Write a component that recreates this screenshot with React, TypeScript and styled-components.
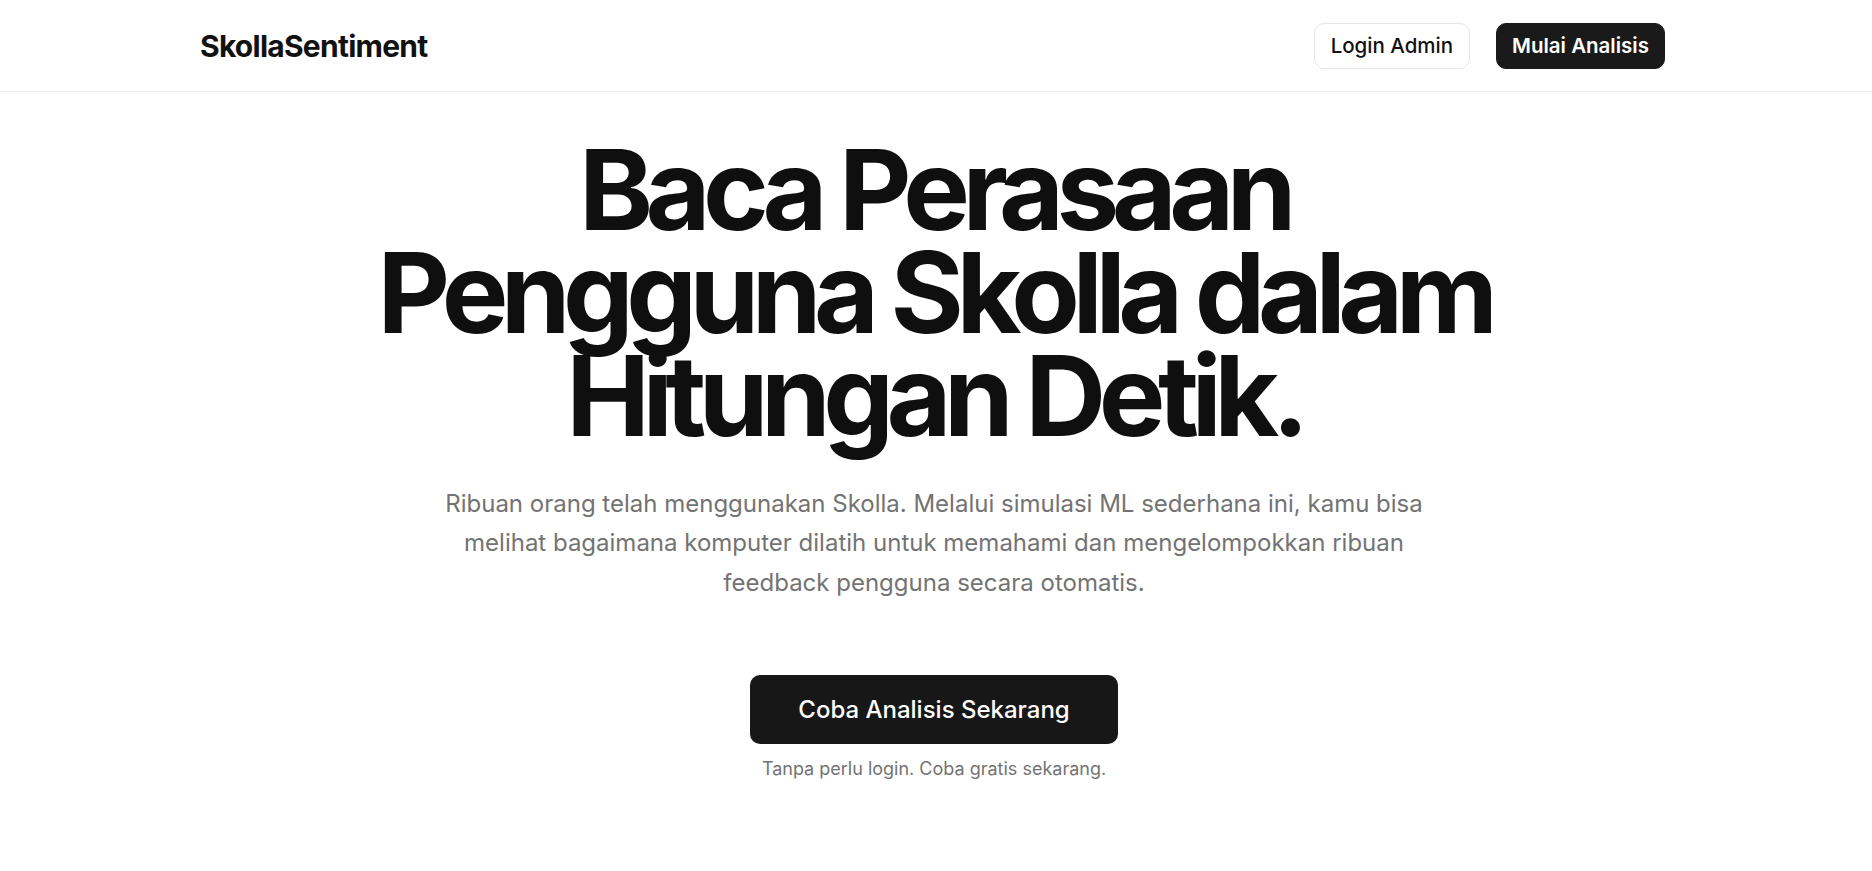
import React from 'react';
import styled, { createGlobalStyle } from 'styled-components';

const GlobalStyle = createGlobalStyle`
    * {
        box-sizing: border-box;
    }

    body {
        margin: 0;
        background: #ffffff;
        font-family: Inter, "Noto Sans", "Liberation Sans", sans-serif;
        color: #0f0f0f;
        -webkit-font-smoothing: antialiased;
    }
`;

const Header = styled.header`
    height: 92px;
    border-bottom: 1px solid #ececec;
`;

const HeaderInner = styled.div`
    height: 100%;
    padding: 0 207px 0 200px;
    display: flex;
    align-items: center;
    justify-content: space-between;
`;

const Logo = styled.a`
    font-size: 30px;
    font-weight: 700;
    letter-spacing: -0.025em;
    color: #111111;
    text-decoration: none;
`;

const Nav = styled.nav`
    display: flex;
    align-items: center;
    gap: 26px;
`;

const Button = styled.button<{ $dark?: boolean }>`
    height: 46px;
    padding: 0 ${(p) => (p.$dark ? '15px' : '16px')};
    border-radius: 10px;
    font-family: inherit;
    font-size: 20.5px;
    font-weight: ${(p) => (p.$dark ? 600 : 500)};
    cursor: pointer;
    border: 1px solid ${(p) => (p.$dark ? '#1a1a1a' : '#e6e6e6')};
    background: ${(p) => (p.$dark ? '#1a1a1a' : '#ffffff')};
    color: ${(p) => (p.$dark ? '#ffffff' : '#111111')};
`;

const Hero = styled.main`
    display: flex;
    flex-direction: column;
    align-items: center;
    padding: 46px 4px 0 0;
    text-align: center;
`;

const Title = styled.h1`
    margin: 0;
    font-size: 112px;
    font-weight: 700;
    line-height: 103px;
    letter-spacing: -0.067em;
    color: #0f0f0f;
`;

const Lead = styled.p`
    max-width: 1000px;
    margin: 37px 0 0;
    font-size: 24px;
    line-height: 39.4px;
    color: #737373;
`;

const CtaButton = styled.button`
    width: 368px;
    height: 69px;
    margin-top: 73px;
    border: none;
    border-radius: 10px;
    background: #171717;
    color: #ffffff;
    font-family: inherit;
    font-size: 24px;
    font-weight: 500;
    cursor: pointer;
`;

const Note = styled.span`
    margin-top: 13px;
    font-size: 18px;
    line-height: 24px;
    color: #737373;
`;

export default function App() {
    return (
        <>
            <GlobalStyle />
            <Header>
                <HeaderInner>
                    <Logo href="#">SkollaSentiment</Logo>
                    <Nav>
                        <Button>Login Admin</Button>
                        <Button $dark>Mulai Analisis</Button>
                    </Nav>
                </HeaderInner>
            </Header>
            <Hero>
                <Title>
                    Baca Perasaan
                    <br />
                    Pengguna Skolla dalam
                    <br />
                    Hitungan Detik.
                </Title>
                <Lead>
                    Ribuan orang telah menggunakan Skolla. Melalui simulasi ML sederhana ini, kamu bisa
                    melihat bagaimana komputer dilatih untuk memahami dan mengelompokkan ribuan
                    feedback pengguna secara otomatis.
                </Lead>
                <CtaButton>Coba Analisis Sekarang</CtaButton>
                <Note>Tanpa perlu login. Coba gratis sekarang.</Note>
            </Hero>
        </>
    );
}
